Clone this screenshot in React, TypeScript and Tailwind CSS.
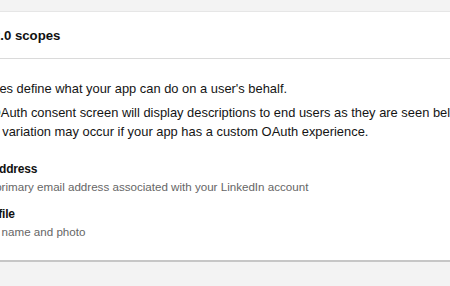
export default function App() {
  return (
    <div className="w-[450px] h-[286px] overflow-hidden bg-[#f3f3f3] pt-[11px] font-['Liberation_Sans',Arial,sans-serif]">
      <section className="-ml-[72px] w-[620px] bg-white border-t border-[#e6e6e6] shadow-[0_2px_0_#c6c6c6]">
        <header className="h-[47px] border-b border-[#dadada] pl-[21px] pt-[2px] flex items-center">
          <h2 className="text-[13.2px] font-bold text-[#111111]">OAuth 2.0 scopes</h2>
        </header>
        <div className="pl-[24px] pt-[20px] pb-[19px]">
          <div className="pl-[13px] w-[538px] text-[12.9px] leading-[19px] text-[#141414]">
            <p className="mb-[5px] pl-[5px]">Scopes define what your app can do on a user's behalf.</p>
            <p>
              The OAuth consent screen will display descriptions to end users as they are seen below. Some
              variation may occur if your app has a custom OAuth experience.
            </p>
          </div>
          <ul className="mt-[19px] flex flex-col gap-[9px]">
            <li>
              <p className="text-[12px] font-bold tracking-[-0.2px] leading-[18px] text-[#111111]">r_emailaddress</p>
              <p className="text-[11.6px] leading-[18px] text-[#666666]">
                Use the primary email address associated with your LinkedIn account
              </p>
            </li>
            <li>
              <p className="text-[12px] font-bold tracking-[-0.2px] leading-[18px] text-[#111111]">r_liteprofile</p>
              <p className="text-[11.6px] leading-[18px] text-[#666666]">Use your name and photo</p>
            </li>
          </ul>
        </div>
      </section>
    </div>
  );
}
